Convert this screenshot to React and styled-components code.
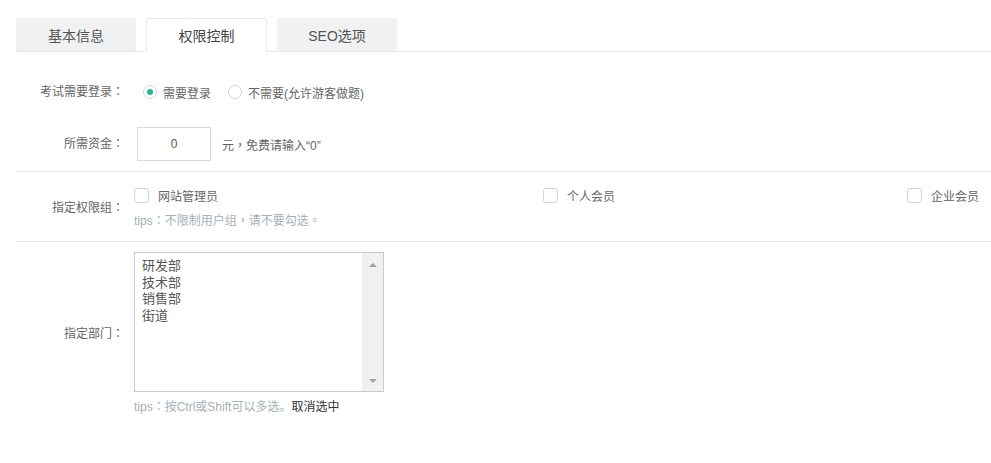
import React, { useState } from "react";
import styled, { createGlobalStyle } from "styled-components";

const GlobalStyle = createGlobalStyle`
  body {
    margin: 0;
    background: #fff;
    font-family: "Liberation Sans", "Noto Sans CJK SC", sans-serif;
    color: #666;
  }
`;

const tabs = ["基本信息", "权限控制", "SEO选项"];
const groups = ["网站管理员", "个人会员", "企业会员"];
const depts = ["研发部", "技术部", "销售部", "街道"];

function App() {
  const [active, setActive] = useState(1);
  const [login, setLogin] = useState(true);
  const [money, setMoney] = useState("0");
  const [checked, setChecked] = useState([]);

  const toggle = (g) =>
    setChecked((c) => (c.includes(g) ? c.filter((x) => x !== g) : [...c, g]));

  return (
    <Page>
      <GlobalStyle />
      <TabBar>
        {tabs.map((t, i) => (
          <Tab key={t} active={i === active} onClick={() => setActive(i)}>
            {t}
          </Tab>
        ))}
      </TabBar>

      <Section>
        <Row height="38px">
          <Label>考试需要登录<P>：</P></Label>
          <Field>
            <RadioLabel onClick={() => setLogin(true)}>
              <Radio on={login} />
              需要登录
            </RadioLabel>
            <RadioLabel onClick={() => setLogin(false)}>
              <Radio on={!login} />
              不需要(允许游客做题)
            </RadioLabel>
          </Field>
        </Row>
        <Row height="34px" top="16px">
          <Label>所需资金<P>：</P></Label>
          <Field>
            <MoneyInput value={money} onChange={(e) => setMoney(e.target.value)} />
            <Hint>元<P>，</P>免费请输入“0”</Hint>
          </Field>
        </Row>
      </Section>

      <GroupSection>
        <Row>
          <Label>指定权限组<P>：</P></Label>
          <Field column>
            <CheckGrid>
              {groups.map((g) => (
                <CheckLabel key={g} onClick={() => toggle(g)}>
                  <Check on={checked.includes(g)} />
                  {g}
                </CheckLabel>
              ))}
            </CheckGrid>
            <Tip>
              tips<P>：</P>不限制用户组<P>，</P>请不要勾选<P>。</P>
            </Tip>
          </Field>
        </Row>
      </GroupSection>

      <DeptSection>
        <Row>
          <Label>指定部门<P>：</P></Label>
          <Field column>
            <ListBox>
              <Options>
                {depts.map((d) => (
                  <Option key={d}>{d}</Option>
                ))}
              </Options>
              <Track>
                <Arrow />
                <Arrow down />
              </Track>
            </ListBox>
            <Tip spaced>
              tips<P>：</P>按Ctrl或Shift可以多选。<Clear>取消选中</Clear>
            </Tip>
          </Field>
        </Row>
      </DeptSection>
    </Page>
  );
}

const Page = styled.div`
  width: 991px;
  height: 463px;
  padding: 18px 0 0 16px;
  box-sizing: border-box;
  overflow: hidden;
`;

/* full-width punctuation centred in its box, as in the original font */
const P = styled.span`
  font-family: "Noto Sans CJK TC", "Noto Sans CJK SC", sans-serif;
  line-height: 1;
`;

const TabBar = styled.div`
  display: flex;
  gap: 10px;
  border-bottom: 1px solid #e8e8e8;
`;

const Tab = styled.div`
  width: ${(p) => (p.active ? "121px" : "120px")};
  height: 34px;
  box-sizing: border-box;
  display: flex;
  align-items: center;
  justify-content: center;
  font-size: 14px;
  border-radius: 3px 3px 0 0;
  cursor: pointer;
  margin-bottom: -1px;
  background: ${(p) => (p.active ? "#fff" : "#f0f1f3")};
  color: ${(p) => (p.active ? "#444" : "#555")};
  border: 1px solid ${(p) => (p.active ? "#e8e8e8" : "transparent")};
  border-bottom-color: ${(p) => (p.active ? "#fff" : "#e8e8e8")};
`;

const Section = styled.div`
  padding: 21px 0 10px;
  border-bottom: 1px solid #e8e8e8;
`;

const GroupSection = styled.div`
  padding: 15px 0 11px;
  border-bottom: 1px solid #e8e8e8;
`;

const DeptSection = styled.div`
  padding: 10px 0;
`;

const Row = styled.div`
  display: flex;
  align-items: center;
  height: ${(p) => p.height || "auto"};
  margin-top: ${(p) => p.top || "0"};
`;

const Label = styled.div`
  width: 108px;
  flex: none;
  text-align: right;
  font-size: 12px;
  line-height: 17px;
  color: #666;
  margin-right: 10px;
`;

const Field = styled.div`
  flex: 1;
  display: flex;
  flex-direction: ${(p) => (p.column ? "column" : "row")};
  align-items: ${(p) => (p.column ? "stretch" : "center")};
  font-size: 12px;
`;

const RadioLabel = styled.label`
  display: flex;
  align-items: center;
  margin-right: 17px;
  color: #666;
  cursor: pointer;
  &:first-child {
    margin-left: 9px;
  }
`;

const Radio = styled.span`
  width: 14px;
  height: 14px;
  box-sizing: border-box;
  border: 1px solid #d0d5d8;
  border-radius: 50%;
  margin-right: 6px;
  display: flex;
  align-items: center;
  justify-content: center;
  &::after {
    content: "";
    width: 6px;
    height: 6px;
    border-radius: 50%;
    background: ${(p) => (p.on ? "#1bb99a" : "transparent")};
  }
`;

const MoneyInput = styled.input`
  width: 74px;
  height: 34px;
  box-sizing: border-box;
  margin-left: 3px;
  border: 1px solid #d5d8da;
  text-align: center;
  font: 12px "Liberation Sans", "Noto Sans CJK SC", sans-serif;
  color: #555;
  outline: none;
`;

const Hint = styled.span`
  margin-left: 11px;
  color: #666;
`;

const CheckGrid = styled.div`
  display: grid;
  grid-template-columns: 409px 364px 1fr;
`;

const CheckLabel = styled.label`
  display: flex;
  align-items: center;
  color: #666;
  cursor: pointer;
  height: 17px;
`;

const Check = styled.span`
  width: 15px;
  height: 15px;
  box-sizing: border-box;
  border: 1px solid #cfd6d8;
  border-radius: 3px;
  margin-right: 9px;
  background: ${(p) => (p.on ? "#1bb99a" : "#fff")};
`;

const Tip = styled.div`
  color: #a5b0b8;
  font-size: 12px;
  line-height: 17px;
  height: 17px;
  margin-top: ${(p) => (p.spaced ? "7px" : "9px")};
`;

const Clear = styled.span`
  color: #333;
  cursor: pointer;
`;

const ListBox = styled.div`
  width: 250px;
  height: 140px;
  box-sizing: border-box;
  border: 1px solid #c9cccf;
  display: flex;
`;

const Options = styled.div`
  flex: 1;
  padding: 5px 0 0 7px;
  font-size: 13px;
  color: #555;
`;

const Option = styled.div`
  line-height: 16.6px;
`;

const Track = styled.div`
  width: 21px;
  background: #f1f1f1;
  display: flex;
  flex-direction: column;
  justify-content: space-between;
  align-items: center;
  padding: 10px 0 8px;
  box-sizing: border-box;
`;

const Arrow = styled.span`
  width: 0;
  height: 0;
  border-left: 4px solid transparent;
  border-right: 4px solid transparent;
  ${(p) =>
    p.down ? "border-top: 4px solid #a3a3a3;" : "border-bottom: 4px solid #a3a3a3;"}
`;

export default App;
